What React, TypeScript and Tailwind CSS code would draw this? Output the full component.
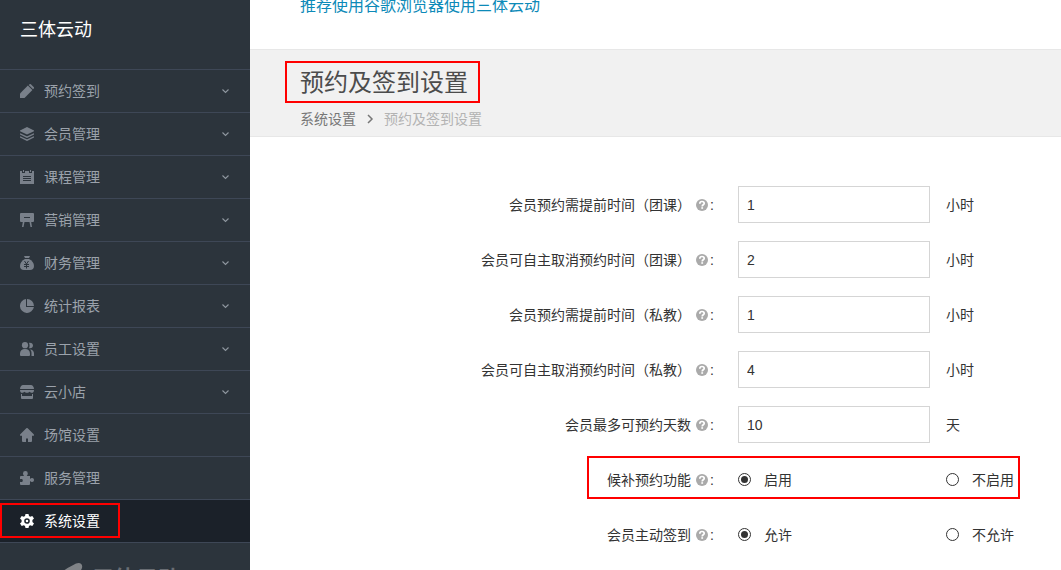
import React, { useState } from 'react';

interface MenuItem {
    label: string;
    icon: React.ReactNode;
    hasChildren?: boolean;
}

interface NumberField {
    id: string;
    label: string;
    value: string;
    unit: string;
}

interface RadioField {
    id: string;
    label: string;
    options: string[];
    highlighted?: boolean;
}

const menuItems: MenuItem[] = [
    {
        label: '预约签到',
        hasChildren: true,
        icon: (
            <>
                <path d="M0 14V9.500L7.900 1.600l4.500 4.500L4.500 14z" />
                <path d="M8.700 1 9.300.4a1.300 1.300 0 0 1 1.800 0l2.500 2.500a1.300 1.300 0 0 1 0 1.800l-.6.6z" />
            </>
        ),
    },
    {
        label: '会员管理',
        hasChildren: true,
        icon: (
            <>
                <path d="M7 0 14 3.500v.7L7 7.600 0 4.200v-.7z" />
                <path d="M0 6.800 7 10.200l7-3.400M0 9.800l7 3.400 7-3.400" fill="none" stroke="currentColor" strokeWidth="1.300" />
            </>
        ),
    },
    {
        label: '课程管理',
        hasChildren: true,
        icon: (
            <path
                fillRule="evenodd"
                d="M0 1h2v2h3V1h4v2h3V1h2v13H0zM3 6v1h8V6zM3 8v1h8V8zM3 10v1h8v-1zM3 0h1v2H3zM10 0h1v2h-1z"
            />
        ),
    },
    {
        label: '营销管理',
        hasChildren: true,
        icon: (
            <path
                fillRule="evenodd"
                d="M1 0h12a1 1 0 0 1 1 1v7a1 1 0 0 1-1 1h-1.800l.8 5h-1.500l-1-5H4.500l-1 5H2l.8-5H1a1 1 0 0 1-1-1V1a1 1 0 0 1 1-1zM4 4v1h6V4z"
            />
        ),
    },
    {
        label: '财务管理',
        hasChildren: true,
        icon: (
            <>
                <path d="M4 0h6L9 2H5z" />
                <path d="M5 3h4c3 1.500 5 4 5 7 0 2.600-1.500 4-4 4H4c-2.500 0-4-1.400-4-4 0-3 2-5.500 5-7z" />
                <path d="M4.500 5 6.500 8l2-3M4 8.500h5M4 10.500h5M6.500 8v4.500" fill="none" stroke="#2c343c" strokeWidth="1" />
            </>
        ),
    },
    {
        label: '统计报表',
        hasChildren: true,
        icon: (
            <>
                <path d="M6 0v8h7.900A7 7 0 1 1 6 0z" />
                <path d="M7 0a7 7 0 0 1 7 7H7z" />
            </>
        ),
    },
    {
        label: '员工设置',
        hasChildren: true,
        icon: (
            <>
                <circle cx="5" cy="3.200" r="3.100" />
                <path d="M5 7c3.200 0 5 2 5 4.500V13a1 1 0 0 1-1 1H1a1 1 0 0 1-1-1v-1.500C0 9 1.800 7 5 7z" />
                <path d="M9 .9c2.500-.4 4 1 4 2.700S11.500 6.700 9 6.200c.8-1.800.8-3.500 0-5.300z" />
                <path d="M10 7.500c2.700.1 4 1.700 4 4V14h-2.500v-3c0-1.500-.4-2.500-1.500-3.500z" />
            </>
        ),
    },
    {
        label: '云小店',
        hasChildren: true,
        icon: (
            <>
                <path d="M3 0h8c1.500 0 3 1.800 3 4H0c0-2.200 1.500-4 3-4z" />
                <path d="M0 5h14c0 1.900-.8 2.800-2 2.800S10.200 7.200 9.500 6.800C8.500 8.200 5.500 8.200 4.500 6.800 3.800 7.200 3.200 7.800 2 7.800S0 6.900 0 5z" />
                <path d="M1 9h1v2h10V9h1v4a1 1 0 0 1-1 1H2a1 1 0 0 1-1-1z" />
            </>
        ),
    },
    {
        label: '场馆设置',
        icon: <path d="M6.300.3a1 1 0 0 1 1.400 0l6 6c.6.7.3 1.500-.5 1.500H12V13a1 1 0 0 1-1 1H8v-3.500H6V14H3a1 1 0 0 1-1-1V7.800H.8c-.8 0-1.100-.8-.5-1.500z" />,
    },
    {
        label: '服务管理',
        icon: (
            <path d="M1 5h3.200C3.500 4 3 3.300 3 2.400a2.400 2.400 0 0 1 4.800 0c0 .9-.5 1.600-1.100 2.600H10v3c1-.7 1.500-1 2.200-1A1.900 1.900 0 0 1 14 9a1.900 1.900 0 0 1-1.800 2c-.7 0-1.200-.3-2.200-1v3a1 1 0 0 1-1 1H1a1 1 0 0 1-1-1v-2.200c1 .4 2.800.5 2.800-1.300S1 7.700 0 8.200V6a1 1 0 0 1 1-1z" />
        ),
    },
    {
        label: '系统设置',
        icon: (
            <path
                fillRule="evenodd"
                d="M5.500 0h3l.5 2 1.200.7 2.100-.8L14 4.600 12.400 6v2L14 9.400l-1.700 2.700-2.100-.8L9 12l-.5 2h-3L5 12l-1.200-.7-2.100.8L0 9.400 1.600 8V6L0 4.600l1.700-2.700 2.100.8L5 2zM7 4.200a2.800 2.800 0 1 0 0 5.600 2.800 2.800 0 0 0 0-5.600zM7 5.700a1.300 1.300 0 1 1 0 2.600 1.300 1.300 0 0 1 0-2.600z"
            />
        ),
    },
];

const numberFields: NumberField[] = [
    { id: 'group-advance', label: '会员预约需提前时间（团课）', value: '1', unit: '小时' },
    { id: 'group-cancel', label: '会员可自主取消预约时间（团课）', value: '2', unit: '小时' },
    { id: 'private-advance', label: '会员预约需提前时间（私教）', value: '1', unit: '小时' },
    { id: 'private-cancel', label: '会员可自主取消预约时间（私教）', value: '4', unit: '小时' },
    { id: 'max-days', label: '会员最多可预约天数', value: '10', unit: '天' },
];

const radioFields: RadioField[] = [
    { id: 'waitlist', label: '候补预约功能', options: ['启用', '不启用'], highlighted: true },
    { id: 'self-checkin', label: '会员主动签到', options: ['允许', '不允许'] },
];

const HelpIcon = () => (
    <svg viewBox="0 0 12 12" className="size-3 shrink-0" aria-hidden="true">
        <circle cx="6" cy="6" r="6" fill="#aaa" />
        <path d="M3.800 4.700C3.800 3.100 4.800 2.500 6 2.500s2.200.7 2.200 1.900C8.200 5.900 6.200 5.700 6.200 7.500" fill="none" stroke="#fff" strokeWidth="1.700" />
        <rect x="5.300" y="8.200" width="1.800" height="1.600" fill="#fff" />
    </svg>
);

const Sidebar = () => {
    const [active, setActive] = useState('系统设置');

    return (
        <aside className="flex w-[250px] shrink-0 flex-col bg-[#2c343c]">
            <div className="flex h-[69px] shrink-0 items-center px-5 pb-[9px] text-lg text-white">三体云动</div>
            <nav className="shrink-0 border-b border-[#3e4756]">
                {menuItems.map(item => {
                    const isActive = item.label === active;
                    return (
                        <button
                            key={item.label}
                            type="button"
                            onClick={() => setActive(item.label)}
                            className={`relative flex h-[43px] w-full items-center border-t border-[#3e4756] pr-5 pl-5 text-left text-sm ${
                                isActive ? 'bg-[#1b2129] text-white' : 'text-[#9ba2ab]'
                            }`}
                        >
                            <svg
                                viewBox="0 0 14 14"
                                className={`mr-2.5 size-3.5 shrink-0 fill-current ${isActive ? 'text-white' : 'text-[#79808a]'}`}
                                aria-hidden="true"
                            >
                                {item.icon}
                            </svg>
                            <span className="flex-1">{item.label}</span>
                            {item.hasChildren && (
                                <svg viewBox="0 0 9 6" className="h-1.5 w-[9px]" aria-hidden="true">
                                    <path d="M1.500 1.500l3 3 3-3" fill="none" stroke="#9097a0" strokeWidth="1.100" />
                                </svg>
                            )}
                            {item.label === '系统设置' && (
                                <span className="pointer-events-none absolute top-[3px] left-0 h-[35px] w-[120px] border-2 border-[#f00]" />
                            )}
                        </button>
                    );
                })}
            </nav>
            {/* Brand mark at the foot of the menu */}
            <div className="flex shrink-0 items-start gap-2 pt-5 pl-[60px] text-[#808387]">
                <svg viewBox="0 0 24 24" className="size-6 fill-current" aria-hidden="true">
                    <path d="M0 10C6 6 11 3 16 .6c4-1.600 7 .4 6 4.400L14 22H4l7-12z" />
                </svg>
                <span className="pt-0.5 text-[22px] leading-7 font-bold text-[#696d73]">三体云动</span>
            </div>
        </aside>
    );
};

const FieldRow: React.FC<{ label: string; htmlFor?: string; labelId?: string; children: React.ReactNode; highlighted?: boolean }> = ({
    label,
    htmlFor,
    labelId,
    children,
    highlighted,
}) => (
    <div className="relative flex h-[37px] items-center">
        <label htmlFor={htmlFor} id={labelId} className="flex flex-1 items-center justify-end pr-6">
            <span className="pr-[5px]">{label}</span>
            <HelpIcon />
            <span className="pl-0.5">:</span>
        </label>
        <div className="flex w-[323px] shrink-0 items-center">{children}</div>
        {highlighted && (
            <span className="pointer-events-none absolute -top-[5px] right-[41px] h-[43px] w-[433px] border-2 border-[#f00]" />
        )}
    </div>
);

const SettingsForm = () => {
    const [values, setValues] = useState<Record<string, string>>(
        Object.fromEntries(numberFields.map(field => [field.id, field.value]))
    );
    const [choices, setChoices] = useState<Record<string, string>>(
        Object.fromEntries(radioFields.map(field => [field.id, field.options[0]]))
    );

    return (
        <form className="flex flex-col gap-[18px] pt-[49px] text-sm text-[#333]">
            {numberFields.map(field => (
                <FieldRow key={field.id} label={field.label} htmlFor={field.id}>
                    <input
                        id={field.id}
                        type="text"
                        value={values[field.id]}
                        onChange={e => setValues({ ...values, [field.id]: e.target.value })}
                        className="h-[37px] w-48 border border-[#d5d5d5] bg-white px-2 outline-none"
                    />
                    <span className="pl-4">{field.unit}</span>
                </FieldRow>
            ))}
            {radioFields.map(field => (
                <FieldRow key={field.id} label={field.label} labelId={`${field.id}-label`} highlighted={field.highlighted}>
                    <div role="radiogroup" aria-labelledby={`${field.id}-label`} className="flex">
                        {field.options.map(option => (
                            <label key={option} className="flex w-52 items-center gap-[13px] last:w-auto">
                                <input
                                    type="radio"
                                    name={field.id}
                                    value={option}
                                    checked={choices[field.id] === option}
                                    onChange={() => setChoices({ ...choices, [field.id]: option })}
                                    className="size-[13px] shrink-0 appearance-none rounded-full border border-[#333] p-[2px] checked:bg-[#333] checked:bg-clip-content"
                                />
                                {option}
                            </label>
                        ))}
                    </div>
                </FieldRow>
            ))}
        </form>
    );
};

const App: React.FC = () => {
    return (
        <div className="flex h-screen overflow-hidden bg-white font-['Liberation_Sans','Noto_Sans_CJK_SC',sans-serif]">
            <Sidebar />
            <main className="min-w-0 flex-1">
                <div className="flex h-[49px] items-start px-[50px]">
                    <a href="#" className="-mt-1.5 leading-6 text-[#0d8ab8]">
                        推荐使用谷歌浏览器使用三体云动
                    </a>
                </div>
                <header className="flex h-[88px] flex-col items-start border-y border-[#e7e7e7] bg-[#f1f1f1] px-[35px] pt-[11px]">
                    <h1 className="border-2 border-[#f00] pt-0.5 pr-[10px] pl-[13px] text-2xl leading-9 text-[#4c4c4c]">预约及签到设置</h1>
                    <nav className="flex items-center gap-2.5 pt-1.5 pl-[15px] text-sm leading-5 text-[#777]">
                        <a href="#">系统设置</a>
                        <svg viewBox="0 0 8 10" className="h-2.5 w-2" aria-hidden="true">
                            <path d="M2 1l4 4-4 4" fill="none" stroke="#777" strokeWidth="1.500" />
                        </svg>
                        <span className="text-[#b3b3b3]">预约及签到设置</span>
                    </nav>
                </header>
                <SettingsForm />
            </main>
        </div>
    );
};

export default App;
